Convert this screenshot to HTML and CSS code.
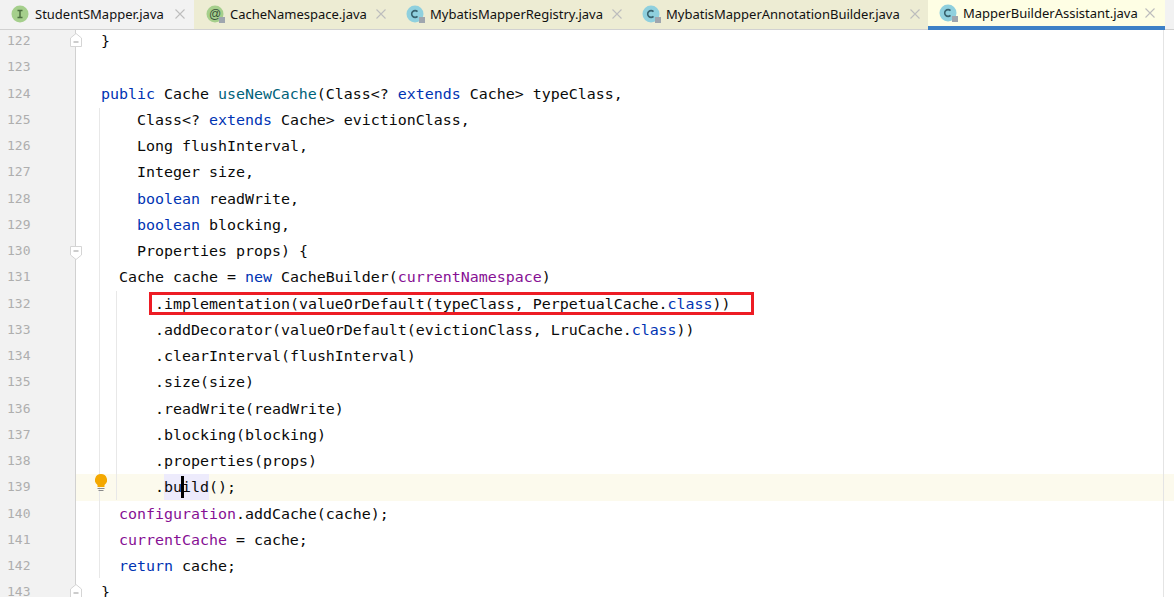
FILE: index.html
```html
<!DOCTYPE html>
<html lang="en">
<head>
<meta charset="utf-8">
<title>MapperBuilderAssistant.java</title>
<link rel="stylesheet" href="styles.css">
</head>
<body>
<div class="tabs">
  <div class="tab tab-plain tab-1"><svg class="ficon" viewBox="0 0 18 18"><circle cx="9" cy="9" r="8.500" fill="#a5cf8c"/><path d="M6.500 5.500h5M6.500 12.500h5M9 5.500v7" stroke="#4d7040" stroke-width="1.500" fill="none"/></svg><span class="tname">StudentSMapper.java</span><svg class="x" viewBox="0 0 10 10"><path d="M.5.5l9 9M9.500.5l-9 9"/></svg></div>
  <div class="tab tab-2"><svg class="ficon" viewBox="0 0 18 18"><circle cx="9" cy="9" r="8.500" fill="#a5cf8c"/><text x="9" y="13" class="ic-at">@</text><rect x="13" y="12" width="6" height="6" fill="#9fa6ae"/></svg><span class="tname">CacheNamespace.java</span><svg class="x" viewBox="0 0 10 10"><path d="M.5.5l9 9M9.500.5l-9 9"/></svg></div>
  <div class="tab tab-3"><svg class="ficon" viewBox="0 0 18 18"><circle cx="9" cy="9" r="8.500" fill="#8fd0de"/><path d="M11.500 6.600a3.400 3.400 0 1 0 0 4.800" stroke="#38626e" stroke-width="1.600" fill="none"/><rect x="13" y="12" width="6" height="6" fill="#9fa6ae"/></svg><span class="tname">MybatisMapperRegistry.java</span><svg class="x" viewBox="0 0 10 10"><path d="M.5.5l9 9M9.500.5l-9 9"/></svg></div>
  <div class="tab tab-4"><svg class="ficon" viewBox="0 0 18 18"><circle cx="9" cy="9" r="8.500" fill="#8fd0de"/><path d="M11.500 6.600a3.400 3.400 0 1 0 0 4.800" stroke="#38626e" stroke-width="1.600" fill="none"/><rect x="13" y="12" width="6" height="6" fill="#9fa6ae"/></svg><span class="tname">MybatisMapperAnnotationBuilder.java</span><svg class="x" viewBox="0 0 10 10"><path d="M.5.5l9 9M9.500.5l-9 9"/></svg></div>
  <div class="tab tab-active"><svg class="ficon" viewBox="0 0 18 18"><circle cx="9" cy="9" r="8.500" fill="#8fd0de"/><path d="M11.500 6.600a3.400 3.400 0 1 0 0 4.800" stroke="#38626e" stroke-width="1.600" fill="none"/><rect x="13" y="12" width="6" height="6" fill="#9fa6ae"/></svg><span class="tname">MapperBuilderAssistant.java</span><svg class="x" viewBox="0 0 10 10"><path d="M.5.5l9 9M9.500.5l-9 9"/></svg></div>
  <div class="tab-rest"></div>
</div>
<div class="editor">
  <div class="guide guide-a"></div>
  <div class="guide guide-b"></div>
  <div class="margin-line"></div>
  <div class="redbox"></div>
  <div class="row"><span class="num">122</span><span class="fold"><svg class="fold-svg" viewBox="0 0 12 14"><path d="M.5 13.500V5L6 .5 11.500 5v8.500z" fill="#fff" stroke="#d5d5d5"/><path d="M3.500 9h5" stroke="#999"/></svg></span><code class="code">}</code></div>
  <div class="row"><span class="num">123</span><span class="fold"></span><code class="code"></code></div>
  <div class="row"><span class="num">124</span><span class="fold"></span><code class="code"><b class="k">public</b> Cache <b class="m">useNewCache</b>(Class&lt;? <b class="k">extends</b> Cache&gt; typeClass,</code></div>
  <div class="row"><span class="num">125</span><span class="fold"></span><code class="code i4">Class&lt;? <b class="k">extends</b> Cache&gt; evictionClass,</code></div>
  <div class="row"><span class="num">126</span><span class="fold"></span><code class="code i4">Long flushInterval,</code></div>
  <div class="row"><span class="num">127</span><span class="fold"></span><code class="code i4">Integer size,</code></div>
  <div class="row"><span class="num">128</span><span class="fold"></span><code class="code i4"><b class="k">boolean</b> readWrite,</code></div>
  <div class="row"><span class="num">129</span><span class="fold"></span><code class="code i4"><b class="k">boolean</b> blocking,</code></div>
  <div class="row"><span class="num">130</span><span class="fold"><svg class="fold-svg fold-down" viewBox="0 0 12 14"><path d="M.5.500h11V9L6 13.500.5 9z" fill="#fff" stroke="#d5d5d5"/><path d="M3.500 5h5" stroke="#999"/></svg></span><code class="code i4">Properties props) {</code></div>
  <div class="row"><span class="num">131</span><span class="fold"></span><code class="code i2">Cache cache = <b class="k">new</b> CacheBuilder(<b class="f">currentNamespace</b>)</code></div>
  <div class="row"><span class="num">132</span><span class="fold"></span><code class="code i6">.implementation(valueOrDefault(typeClass, PerpetualCache.<b class="k">class</b>))</code></div>
  <div class="row"><span class="num">133</span><span class="fold"></span><code class="code i6">.addDecorator(valueOrDefault(evictionClass, LruCache.<b class="k">class</b>))</code></div>
  <div class="row"><span class="num">134</span><span class="fold"></span><code class="code i6">.clearInterval(flushInterval)</code></div>
  <div class="row"><span class="num">135</span><span class="fold"></span><code class="code i6">.size(size)</code></div>
  <div class="row"><span class="num">136</span><span class="fold"></span><code class="code i6">.readWrite(readWrite)</code></div>
  <div class="row"><span class="num">137</span><span class="fold"></span><code class="code i6">.blocking(blocking)</code></div>
  <div class="row"><span class="num">138</span><span class="fold"></span><code class="code i6">.properties(props)</code></div>
  <div class="row row-current"><span class="num">139</span><span class="fold"><svg class="bulb" viewBox="0 0 12 18"><path d="M6 0a6 6 0 0 1 3.500 10.900V13h-7v-2.100A6 6 0 0 1 6 0z" fill="#f4a800"/><path d="M2.500 14.500h7M3.500 16.500h5" stroke="#8a8a8a" stroke-width="1.200"/></svg></span><code class="code i6">.<span class="word">bu<i class="caret"></i>ild</span>();</code></div>
  <div class="row"><span class="num">140</span><span class="fold"></span><code class="code i2"><b class="f">configuration</b>.addCache(cache);</code></div>
  <div class="row"><span class="num">141</span><span class="fold"></span><code class="code i2"><b class="f">currentCache</b> = cache;</code></div>
  <div class="row"><span class="num">142</span><span class="fold"></span><code class="code i2"><b class="k">return</b> cache;</code></div>
  <div class="row"><span class="num">143</span><span class="fold"><svg class="fold-svg" viewBox="0 0 12 14"><path d="M.5 13.500V5L6 .5 11.500 5v8.500z" fill="#fff" stroke="#d5d5d5"/><path d="M3.500 9h5" stroke="#999"/></svg></span><code class="code">}</code></div>
</div>
</body>
</html>
```
FILE: styles.css
```css
* { box-sizing: border-box; }
html, body { margin: 0; height: 100%; overflow: hidden; background: #fff; }
body { width: 1174px; height: 597px; display: flex; flex-direction: column; }

.tabs { position: relative; z-index: 3; display: flex; height: 30px; flex: none; border-bottom: 1px solid #d1d1d1; background: #edecd3; }
.tab { display: flex; align-items: center; height: 29px; padding: 0 8px 2px 12px; font: 13px/26px "Noto Sans", sans-serif; color: #111; }
.tab-plain { background: #f2f2f2; }
.tab-1 { width: 194px; padding-left: 11px; padding-right: 9px; }
.tab-2 { width: 200px; }
.tab-3 { width: 236px; }
.tab-4 { width: 298px; }
.tab-active { width: 237px; height: 30px; background: #fefee4; border-bottom: 4px solid #3d80c6; padding: 0 10px 0 11px; }
.tab-rest { flex: 1; background: #f2f2f2; }
.ficon { width: 18px; height: 18px; flex: none; margin-right: 6px; overflow: visible; }
.ic-at { font: 12px "Liberation Sans", sans-serif; fill: #38503a; text-anchor: middle; }
.tname { white-space: nowrap; }
.x { margin-left: auto; width: 10px; height: 10px; flex: none; fill: none; stroke: #bdbdbd; stroke-width: 1.100; }

.editor { position: relative; flex: none; height: 569px; margin-top: -2px; overflow: hidden; background: linear-gradient(to right, #f2f2f2 75px, #d1d1d1 75px, #d1d1d1 76px, #fff 76px); }
.row { display: flex; height: 26.25px; }
.row-current { background: linear-gradient(to right, #f2f2f2 75px, #d1d1d1 75px, #d1d1d1 76px, #fcfaed 76px); }
.num { width: 75px; flex: none; padding-left: 7px; font: 13px/26px "DejaVu Sans Mono", monospace; color: #aeaeae; }
.fold { width: 26px; flex: none; margin-left: -6px; margin-right: 6px; position: relative; }
.fold-svg { position: absolute; left: 1px; top: 5px; width: 12px; height: 14px; }
.fold-down { top: 8px; }
.bulb { position: absolute; left: 26px; top: 0; width: 12px; height: 18px; }
.code { font: 14.95px/26px "DejaVu Sans Mono", monospace; color: #0a0a0a; white-space: pre; }
.code b { font-weight: 400; }
.i2 { padding-left: 18px; }
.i4 { padding-left: 36px; }
.i6 { padding-left: 54px; }
.k { color: #0033b3; }
.m { color: #00627a; }
.f { color: #871094; }
.word { position: relative; display: inline-block; height: 26px; line-height: 26px; background: #edebfc; vertical-align: top; }
.caret { position: absolute; left: 17px; top: 2px; width: 3px; height: 22px; background: #000; }

.guide { position: absolute; width: 1px; background: #e8e8e8; }
.guide-a { left: 99px; top: 80px; height: 470px; }
.guide-b { left: 116px; top: 263px; height: 209px; }
.margin-line { position: absolute; left: 1163px; top: 2px; bottom: 0; width: 1px; background: #e4e4e4; }
.redbox { position: absolute; left: 149px; top: 264px; width: 605px; height: 23px; border: 3px solid #ed1c24; z-index: 2; }
```
